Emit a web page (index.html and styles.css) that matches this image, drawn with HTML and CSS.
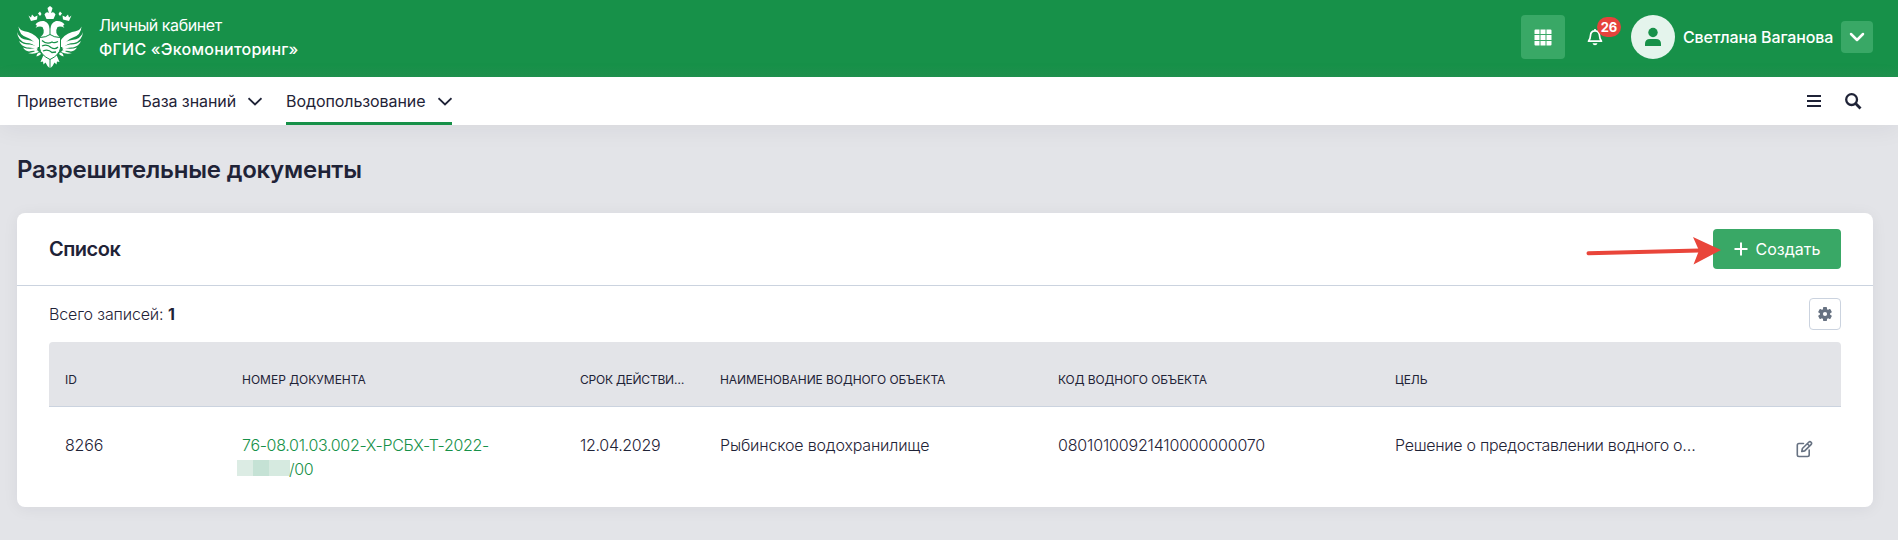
FILE: index.html
```
<!DOCTYPE html>
<html lang="ru">
<head>
<meta charset="utf-8">
<title>Разрешительные документы</title>
<link rel="stylesheet" href="styles.css">
</head>
<body>
<header class="top">
  <svg class="emblem" width="68" height="64" viewBox="0 0 68 64" fill="#fff">
    <g id="half">
      <path d="M2.500 21.500Q4 26 12 27Q21 30 24 37V42L21 42Q18 35 11 32.500Q3 30 2.500 21.500Z"/>
      <path d="M1 27Q3 34 12 35Q19 36 22 40L21 43Q17 38 10 38Q2 36 1 27Z"/>
      <path d="M3 36Q8 40 14 39.500Q19 40 22 42L20 44.500Q16 42 11 42.500Q5 41 3 36Z"/>
      <path d="M7 42.500Q12 44.500 16 43.500Q20 43.500 22 43.500L20 46Q16 45.500 13 46.500Q9 46 7 42.500Z"/>
      <path d="M12 48Q16 48.500 21 45L23 47Q17 50 12 48Z"/>
      <path d="M19.500 19.500Q22 15.500 28 16Q33.500 18 33.500 24V31L24 32.500Q30 28 26.500 22Q23 20.800 19.500 23Q22 20.300 19.500 19.500Z"/>
      <path d="M12.500 10.500L15 12.500L16 9.500L18.500 12L21.500 10.500L21 14.500L15 16ZM22 8.500L24 6.500L25.500 9L24 11Z"/>
      <path d="M24 47.500Q20.500 48 20.500 51.500L23 50.500L25 49ZM27.500 50L24.500 57L27 56.500L27.500 59.500L29.500 57.500L31.500 61L33.500 63V51Z"/>
    </g>
    <use href="#half" transform="translate(68 0) scale(-1 1)"/>
    <path d="M28.500 9.500Q30.500 6 33 8L32 5L31.500 3L34 1L36.500 3L36 5L35 8Q37.500 6 39.500 9.500L37.500 14H30.500Z"/>
    <path d="M23.500 32.500Q30 32.500 34 29.500Q38 32.500 44.500 32.500V43Q43.500 50 34 54.500Q24.500 50 23.500 43Z" stroke="#179149" stroke-width="1"/>
    <path d="M26 35.500Q31 40 36 37Q38 38.500 42 36.500M26 41Q31 38.500 35 42.500Q39 45 42 42M27 46Q32 43.500 36 47.500L40 47" fill="none" stroke="#179149" stroke-width="1.300"/>
  </svg>
  <div class="brand"><span class="brand-a">Личный кабинет</span><span class="brand-b">ФГИС «Экомониторинг»</span></div>
  <div class="tools">
    <button class="apps" aria-label="Сервисы">
      <svg width="18" height="17" viewBox="0 0 18 17" fill="#fff"><path d="M.5 1.500Q.5.500 1.500.500H5.500V5H.5ZM6.500.500H11.500V5H6.500ZM12.500.500H16.500Q17.500.500 17.500 1.500V5H12.500ZM.5 6H5.500V11H.5ZM6.500 6H11.500V11H6.500ZM12.500 6H17.500V11H12.500ZM.5 12H5.500V16.500H1.500Q.5 16.500.5 15.500ZM6.500 12H11.500V16.500H6.500ZM12.500 12H17.500V15.500Q17.500 16.500 16.500 16.500H12.500Z"/></svg>
    </button>
    <div class="bell">
      <svg width="16" height="18" viewBox="0 0 16 18" fill="none" stroke="#fff" stroke-width="1.700" stroke-linejoin="round"><path d="M8 1V2.500M3.500 7.500Q3.700 2.800 8 2.800Q12.300 2.800 12.500 7.500Q12.500 10.500 14.500 13.200H1.500Q3.500 10.500 3.500 7.500Z"/><path d="M5.500 15.300H10.500Q10 17.300 8 17.300Q6 17.300 5.500 15.300Z" fill="#fff" stroke="none"/></svg>
      <span class="badge">26</span>
    </div>
    <div class="avatar"><svg width="18" height="20" viewBox="0 0 18 20" fill="#179149"><circle cx="9" cy="5.500" r="4.700"/><path d="M1 19V17Q1 12 6 12H12Q17 12 17 17V19Z"/></svg></div>
    <span class="user">Светлана Ваганова</span>
    <button class="drop" aria-label="Меню пользователя"><svg width="16" height="10" viewBox="0 0 16 10" fill="none" stroke="#fff" stroke-width="2.500" stroke-linecap="round" stroke-linejoin="round"><path d="M2 2L8 8L14 2"/></svg></button>
  </div>
</header>
<nav class="nav">
  <a class="item">Приветствие</a>
  <a class="item">База знаний<svg class="chev" width="14" height="9" viewBox="0 0 14 9"><path d="M.5 1.200L7 7.400L13.500 1.200"/></svg></a>
  <a class="item active">Водопользование<svg class="chev" width="14" height="9" viewBox="0 0 14 9"><path d="M.5 1.200L7 7.400L13.500 1.200"/></svg></a>
  <div class="nav-tools">
    <svg width="14" height="12" viewBox="0 0 14 12" fill="#1f2337"><path d="M0 0H14V2H0ZM0 5H14V7H0ZM0 10H14V12H0Z"/></svg>
    <svg width="17" height="17" viewBox="0 0 17 17" fill="none" stroke="#1f2337"><circle cx="6.600" cy="6.600" r="5.400" stroke-width="2.300"/><path d="M10.600 10.600L15.500 15.500" stroke-width="2.800"/></svg>
  </div>
</nav>
<main class="page">
  <h1 class="title">Разрешительные документы</h1>
  <section class="card">
    <div class="card-head">
      <h2 class="subtitle">Список</h2>
      <button class="create"><svg width="14" height="14" viewBox="0 0 14 14" stroke="#fff" stroke-width="2"><path d="M7 .5V13.500M.5 7H13.500"/></svg><span>Создать</span></button>
      <svg class="arrow" width="136" height="30" viewBox="0 0 136 30"><path d="M3.500 17.300L114 14.500" stroke="#e9453a" stroke-width="4" stroke-linecap="round"/><path d="M108 1L136 14L108.500 28.500L114 14.500Z" fill="#e9453a"/></svg>
    </div>
    <div class="card-body">
      <div class="summary">
        <span><span class="total">Всего записей:</span> <b class="count">1</b></span>
        <button class="gear" aria-label="Настройки"><svg width="14" height="14" viewBox="0 0 14 14"><g fill="#677282"><circle cx="7" cy="7" r="5.200"/><rect x="5" y="0" width="4" height="14" rx=".7"/><rect x="5" y="0" width="4" height="14" rx=".7" transform="rotate(60 7 7)"/><rect x="5" y="0" width="4" height="14" rx=".7" transform="rotate(120 7 7)"/></g><circle cx="7" cy="7" r="2.100" fill="#fff"/></svg></button>
      </div>
      <div class="row head">
        <div>ID</div><div>НОМЕР ДОКУМЕНТА</div><div class="due">СРОК ДЕЙСТВИ…</div><div class="wide">НАИМЕНОВАНИЕ ВОДНОГО ОБЪЕКТА</div><div class="wide">КОД ВОДНОГО ОБЪЕКТА</div><div>ЦЕЛЬ</div><div></div>
      </div>
      <div class="row data">
        <div class="id">8266</div>
        <div class="doc"><span class="num">76-08.01.03.002-Х-РСБХ-Т-2022-</span><span class="tail"><i class="mask"><i></i><i></i><i></i></i>/00</span></div>
        <div class="date">12.04.2029</div>
        <div class="name">Рыбинское водохранилище</div>
        <div class="code">08010100921410000000070</div>
        <div class="goal">Решение о предоставлении водного о…</div>
        <div class="edit"><svg width="17" height="18" viewBox="0 0 17 18" fill="none" stroke="#677282" stroke-width="1.600" stroke-linejoin="round" stroke-linecap="round"><path d="M7.500 3.500H3Q1.300 3.500 1.300 5.200V14.800Q1.300 16.500 3 16.500H11.500Q13.200 16.500 13.200 14.800V10"/><path d="M5.800 11.500L6.400 8.500L12.700 2.200Q13.900 1 15.100 2.200Q16.200 3.400 15 4.600L8.700 10.900ZM11.300 3.700L13.600 6"/></svg></div>
      </div>
    </div>
  </section>
</main>
</body>
</html>
```
FILE: styles.css
```
* { box-sizing: border-box; }
body {
  margin: 0;
  height: 540px;
  overflow: hidden;
  background: #e3e4e8;
  color: #1f2337;
  font: 400 16px/24px Inter, "Liberation Sans", sans-serif;
}
button { border: 0; padding: 0; font: inherit; color: inherit; display: flex; align-items: center; justify-content: center; }
h1, h2 { margin: 0; font-weight: 600; }
svg { display: block; flex: none; }

.top {
  display: flex;
  align-items: flex-start;
  height: 77px;
  padding-left: 16px;
  padding-right: 25px;
  background: linear-gradient(#179149 65px, #20934f 77px);
  color: #fff;
}
.emblem { margin-top: 5px; }
.brand { display: flex; flex-direction: column; margin: 13px 0 0 15px; white-space: nowrap; }
.brand-a { letter-spacing: -.43px; }
.brand-b { font-weight: 500; letter-spacing: .24px; }
.tools { display: flex; align-items: center; height: 44px; margin: 15px 0 0 auto; }
.apps { width: 44px; height: 44px; border-radius: 4px; background: #39a866; }
.bell { position: relative; margin: 0 28px 0 22px; }
.badge {
  position: absolute;
  left: 10px;
  top: -11px;
  width: 24px;
  height: 20px;
  border-radius: 10px;
  background: #e5433c;
  font-size: 13px;
  line-height: 20px;
  font-weight: 700;
  text-align: center;
}
.avatar { display: flex; align-items: center; justify-content: center; width: 44px; height: 44px; border-radius: 50%; background: #e4f4ec; }
.user { width: 158px; padding-left: 8px; font-weight: 500; letter-spacing: -.14px; white-space: nowrap; }
.drop { width: 32px; height: 32px; margin-left: 8px; border-radius: 4px; background: #39a866; }

.nav {
  display: flex;
  gap: 24px;
  height: 48px;
  padding: 0 36px 0 17px;
  background: #fff;
  box-shadow: 0 4px 24px rgba(31, 35, 55, .06);
  letter-spacing: -.08px;
}
.item { display: flex; align-items: center; height: 48px; white-space: nowrap; }
.active { border-bottom: 3px solid #179149; padding-top: 3px; }
.chev { margin-left: 12px; fill: none; stroke: #1f2337; stroke-width: 1.8; }
.nav-tools { display: flex; align-items: center; gap: 24px; margin-left: auto; }

.page { padding: 33px 25px 0 17px; }
.title { font-size: 24px; line-height: 24px; letter-spacing: -.22px; }
.card { margin-top: 31px; height: 294px; border-radius: 8px; background: #fff; box-shadow: 0 2px 16px rgba(31, 35, 55, .06); }
.card-head {
  position: relative;
  display: flex;
  align-items: center;
  justify-content: space-between;
  height: 73px;
  padding: 0 32px;
  border-bottom: 1px solid #cbd3df;
}
.subtitle { font-size: 20px; letter-spacing: -.5px; }
.create { gap: 8px; width: 128px; height: 40px; border-radius: 4px; background: #39a866; color: #fff; }
.arrow { position: absolute; right: 152px; top: 23px; }
.card-body { padding: 12px 32px 0; }
.summary { display: flex; align-items: center; justify-content: space-between; height: 32px; margin-bottom: 12px; font-weight: 350; }
.total { letter-spacing: -.15px; }
.count { font-weight: 700; }
.gear { width: 32px; height: 32px; border: 1px solid #cbd3df; border-radius: 4px; background: #fff; }

.row { display: grid; grid-template-columns: 177px 338px 140px 338px 337px 338px 124px; }
.row > div { padding-left: 16px; white-space: nowrap; }
.head {
  height: 65px;
  padding-top: 26px;
  border-radius: 4px 4px 0 0;
  border-bottom: 1px solid #cbd3df;
  background: #e3e4e8;
  font-size: 12px;
}
.due { letter-spacing: -.22px; }
.wide { letter-spacing: -.08px; }
.data { padding-top: 26px; font-weight: 350; }
.id { letter-spacing: -.2px; }
.doc { display: flex; flex-direction: column; color: #179149; }
.num { letter-spacing: -.32px; }
.tail { display: flex; align-items: center; letter-spacing: -.3px; }
.mask { display: flex; width: 53px; height: 16px; margin: 0 -1px 2px -5px; }
.mask i { width: 16px; background: #dcece4; }
.mask i:nth-child(2) { background: #c5e2d5; }
.mask i:last-child { width: 21px; background: #d6eae0; }
.date { letter-spacing: -.3px; }
.name { letter-spacing: -.17px; }
.code { letter-spacing: -.17px; }
.goal { letter-spacing: -.29px; }
.row > .edit { display: flex; justify-content: flex-end; padding: 7px 28px 0 0; }
```
